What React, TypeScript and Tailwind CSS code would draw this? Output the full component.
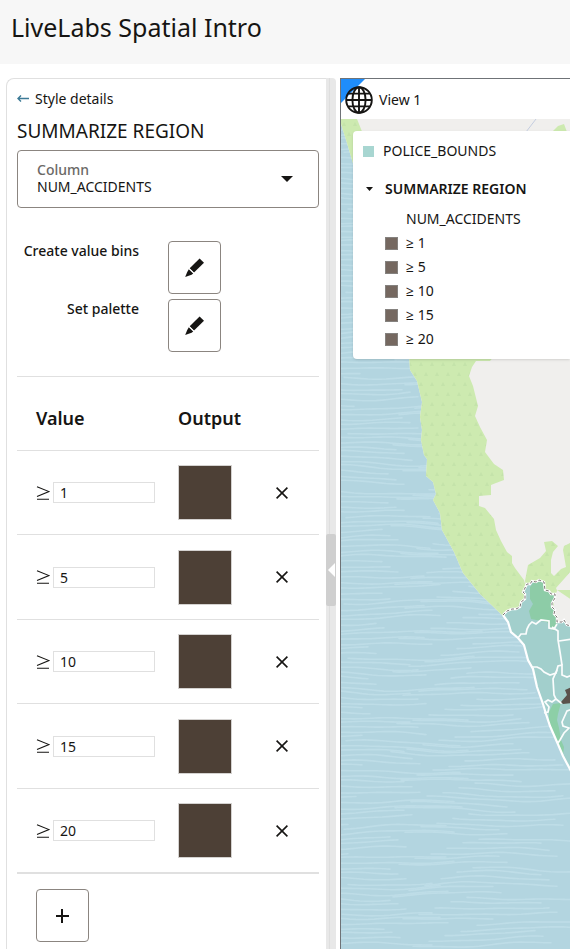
import { useState } from 'react';

const LAND_EDGE =
  '409,355 410,370 417,381 422,402 420,417 422,430 421,440 424,455 427,459 426,476 433,482 436,494 433,500 440,513 442,530 454,552 463,573 480,594 503,616';

const COAST =
  '503,615 508,622 511,632 518,638 524,645 528,660 533,669 537,687 543,704 546,714 550,726 557,742 563,756 572,773';

const DISTRICT_TOP =
  '503,615 507,611 512,609 516,609 520,607 521,602 525,599 525,594 523,592 527,584 530,584 532,581 536,582 539,580 544,582 545,590 549,591 551,594 555,594 555,598 552,603 552,607 555,610 554,614 557,617 557,622 562,622 564,620 567,625 572,626';

const DISTRICT_LINES = [
  '518,638 521,634 526,634 527,629 529,625 532,622 536,624 541,620 549,621 549,628 554,629 557,624',
  '552,627 558,631 558,640 560,652 562,665',
  '559,641 572,639',
  '532,667 537,667 541,669 544,672 550,675 556,673 558,666 562,665 562,675 567,677 572,675',
  '557,670 553,679 554,695 556,699 552,702 548,700 545,702 549,707 548,712 544,713',
  '556,699 561,703 566,700',
  '572,709 567,711 562,722 563,726 569,728 564,733 560,740 558,743'
];

const buildWaves = () => {
  const lines: string[] = [];
  for (let i = 0; i < 330; i++) {
    const row = Math.floor(i / 2);
    const y = 122 + row * 5 + (i % 2) * 1.5 + ((row * 7) % 3) * 0.6;
    const start = 300 + (i % 2) * 130 + ((i * 37) % 90) - 40;
    const length = 80 + ((i * 47) % 70);
    let d = '';
    for (let x = start; x <= start + length; x += 6) {
      const dy =
        Math.sin(x / 23 + row * 0.31) * 1.2 +
        Math.sin(x / 11 + row * 1.7) * 0.5 +
        Math.sin(x / 41 - row * 0.13) * 1.6;
      d += `${d ? 'L' : 'M'}${x} ${(y + dy).toFixed(1)}`;
    }
    lines.push(d);
  }
  return lines;
};

const WAVES = buildWaves();

const CoastMap = () => (
  <svg
    className="absolute inset-0 h-full w-full"
    viewBox="341 119 229 830"
    preserveAspectRatio="xMinYMin slice"
    aria-hidden="true"
  >
    <defs>
      <pattern id="forest" width="11" height="20" patternUnits="userSpaceOnUse">
        <rect width="11" height="20" fill="#cdeab0" />
        <path d="M1 6l2-4 2 4zM6 16l2-4 2 4z" fill="#c4e3aa" />
      </pattern>
    </defs>

    {/* Sea */}
    <rect x="341" y="119" width="900" height="830" fill="#b3d5e0" />
    {WAVES.map((d, index) => (
      <path key={index} d={d} fill="none" stroke="#c1dee8" strokeWidth="1.6" strokeLinecap="round" opacity="0.8" />
    ))}

    {/* Land */}
    <polygon points={`341,119 341,124 347,143 352,160 380,260 ${LAND_EDGE} ${COAST} 900,900 900,119`} fill="#f0efed" />
    <polygon points="341,119 357,119 363,134 400,250 400,350 409,355 380,260 352,160 347,143 341,124" fill="url(#forest)" />
    <path d="M536 119L526 132" stroke="#c4cde0" strokeWidth="1" />
    <path d="M552 132L558 126 564 124 567 132Z" fill="#cdeab0" />
    <polygon
      points={`${LAND_EDGE} 530,602 524,580 515,568 512,563 512,556 507,552 501,541 496,530 494,519 485,508 479,506 479,496 491,495 491,485 496,483 504,480 503,470 494,464 485,452 487,440 480,427 475,416 478,406 473,386 469,376 472,367 476,361 490,361 495,355`}
      fill="url(#forest)"
    />
    <path
      d="M525 581L528 565 540 558 546 551 544 542 552 541 558 546 553 552 551 560 551 573 554 576 561 569 566 567 563 550 564 546 572 542 572 570 556 588 558 593 572 599 552 606 530 600Z"
      fill="url(#forest)"
    />
    <path d="M572 570L557 591 553 600 557 622 572 626Z" fill="#f0efed" />
    <path d="M557 590L572 590V600Z" fill="#cdeab0" />

    {/* Districts */}
    <polygon points={`${DISTRICT_TOP} 900,630 900,900 ${COAST.split(' ').reverse().join(' ')}`} fill="#a2cfcc" />
    <path
      d="M534 582L539 580 544 582 545 590 555 594 552 607 557 618 557 624 553 631 547 622 531 619 529 611 533 604 530 599 530 587Z"
      fill="#8dcca7"
    />
    <path
      d="M549 712L553 704 561 703 558 714 557 720 559 728 561 740 564 747 563 755 555 738 549 722Z"
      fill="#8dcfa7"
    />
    <polyline points={COAST} fill="none" stroke="#fff" strokeWidth="2.2" />
    {DISTRICT_LINES.map((points) => (
      <polyline key={points} points={points} fill="none" stroke="#fbfdfd" strokeWidth="1.7" />
    ))}
    <polyline points={DISTRICT_TOP} fill="none" stroke="#fff" strokeWidth="2.4" />
    <polyline points={DISTRICT_TOP} fill="none" stroke="#7d7674" strokeWidth="1" strokeDasharray="3 2" />
    <path d="M561 702L567 695 565 690 572 687V703L563 704Z" fill="#5a524c" />
  </svg>
);

const PencilIcon = () => (
  <svg className="h-5 w-5" viewBox="0 0 20 20" fill="#161513" aria-hidden="true">
    <path d="M14.6 .5L19 4.7 9 14.4 4.7 10.2Z" />
    <path d="M3.8 11.2L8.2 15.4 6.6 16.7 2.3 18.2.2 18.9 2 14.5Z" />
    <path d="M4.4 10.6L8.7 14.9" stroke="#fff" strokeWidth="1" />
  </svg>
);

const GlobeIcon = () => (
  <svg className="h-7 w-7" viewBox="0 0 28 28" fill="none" stroke="#161513" strokeWidth="1.9" aria-hidden="true">
    <circle cx="14" cy="14" r="12.8" />
    <ellipse cx="14" cy="14" rx="6.6" ry="12.8" />
    <path d="M14 1v26M1 14h26M3 7.6h22M3 20.4h22" />
  </svg>
);

const tools = ['Create value bins', 'Set palette'];

export default function App() {
  const [bins, setBins] = useState(['1', '5', '10', '15', '20']);

  return (
    <div className="flex min-h-screen flex-col bg-white font-['Noto_Sans','Open_Sans',sans-serif] text-sm text-[#161513]">
      <header className="flex h-16 items-center bg-[#f7f7f7] px-[11px] pb-[10px]">
        <h1 className="text-[25px] leading-8">LiveLabs Spatial Intro</h1>
      </header>

      <main className="flex flex-1 pt-[14px] pl-[6px]">
        {/* Style panel */}
        <section className="w-80 shrink-0 rounded-tl-lg border-t border-l border-[#e0e0e0] pt-[10px] pr-[7px] pl-[10px]">
          <a href="#style" className="flex items-center gap-[6px] leading-5">
            <svg className="h-3 w-3" viewBox="0 0 12 12" fill="none" stroke="#3c7a96" strokeWidth="1.4" aria-hidden="true">
              <path d="M12 5.5H1M4 2.5l-3 3 3 3" />
            </svg>
            Style details
          </a>
          <h2 className="mt-2 text-[19px] leading-7">SUMMARIZE REGION</h2>

          <div className="relative mt-[5px] h-[58px] rounded border border-[#8b8580]">
            <label htmlFor="column" className="absolute top-[10px] left-[19px] leading-[18px] font-medium text-[#6b6966]">
              Column
            </label>
            <select
              id="column"
              defaultValue="NUM_ACCIDENTS"
              className="h-full w-full appearance-none bg-transparent px-[19px] pt-4"
            >
              <option>NUM_ACCIDENTS</option>
            </select>
            <svg className="pointer-events-none absolute top-[25px] right-[25px] h-[6px] w-3" viewBox="0 0 12 6" aria-hidden="true">
              <path d="M0 0h12L6 6z" fill="#161513" />
            </svg>
          </div>

          <div className="mt-[33px] flex flex-col gap-[5px] border-b border-[#e0e0e0] pb-6">
            {tools.map((tool) => (
              <div key={tool} className="flex">
                <span className="w-[122px] text-right leading-5 font-medium">{tool}</span>
                <button
                  type="button"
                  aria-label={tool}
                  className="ml-[29px] flex h-[53px] w-[53px] items-center justify-center rounded border border-[#8b8580]"
                >
                  <PencilIcon />
                </button>
              </div>
            ))}
          </div>

          <table className="w-full table-fixed border-collapse">
            <thead>
              <tr className="h-[73px] border-b border-[#e0e0e0] text-left text-lg">
                <th className="w-[161px] pt-[10px] pl-[19px] font-semibold">Value</th>
                <th className="w-[84px] pt-[10px] font-semibold">Output</th>
                <th></th>
              </tr>
            </thead>
            <tbody>
              {bins.map((bin, index) => (
                <tr key={bin + index} className="h-[85px] border-b border-[#e0e0e0] last:border-b-2 odd:not-last:h-[84px]">
                  <td className="pt-px pl-[19px]">
                    <label className="flex items-center gap-[3px]">
                      <svg className="h-[14px] w-[14px]" viewBox="0 0 14 14" fill="none" stroke="#161513" strokeWidth="1.1" aria-label="at least">
                        <path d="M1 .8L13 5.6 1 10.4M1 13.3h12" />
                      </svg>
                      <input defaultValue={bin} className="h-[21px] w-[102px] border border-[#e0e0e0] px-[6px]" />
                    </label>
                  </td>
                  <td className="pt-px">
                    <button
                      type="button"
                      aria-label={`Color for ${bin}`}
                      className="block h-[55px] w-[54px] border border-[#d4d2d0] bg-[#4d4036]"
                    ></button>
                  </td>
                  <td className="pt-px">
                    <button
                      type="button"
                      aria-label={`Remove ${bin}`}
                      className="ml-[14px] block"
                      onClick={() => setBins(bins.filter((_, i) => i !== index))}
                    >
                      <svg className="h-3 w-3" viewBox="0 0 12 12" fill="none" stroke="#161513" strokeWidth="1.6" aria-hidden="true">
                        <path d="M.6.6l10.8 10.8M11.4.6L.6 11.4" />
                      </svg>
                    </button>
                  </td>
                </tr>
              ))}
            </tbody>
          </table>

          <button
            type="button"
            aria-label="Add value"
            onClick={() => setBins([...bins, ''])}
            className="mt-[15px] ml-[19px] flex h-[53px] w-[53px] items-center justify-center rounded border border-[#8b8580]"
          >
            <svg className="h-[14px] w-[14px]" viewBox="0 0 14 14" stroke="#161513" strokeWidth="2" aria-hidden="true">
              <path d="M6 0v14M-1 7h14" />
            </svg>
          </button>
        </section>

        {/* Splitter */}
        <div className="relative mr-1 flex w-[10px] shrink-0 items-center rounded-tr bg-[#e8e8e8]">
          <div className="h-full w-1 border-r border-[#dedede]"></div>
          <button
            type="button"
            aria-label="Collapse panel"
            className="absolute top-[456px] left-0 flex h-[72px] w-[10px] items-center justify-end rounded-xs bg-[#cfcfcf]"
          >
            <svg className="h-[14px] w-2" viewBox="0 0 8 14" aria-hidden="true">
              <path d="M7 0v14L0 7z" fill="#fff" />
            </svg>
          </button>
        </div>

        {/* Map view */}
        <section className="flex min-w-0 flex-1 flex-col border-t border-l border-[#6f7377]">
          <div className="relative flex h-10 items-center gap-[6px] pt-[2px] pl-1">
            <svg className="absolute top-0 left-0 h-6 w-6" viewBox="0 0 24 24" aria-hidden="true">
              <path d="M0 0h24L0 24z" fill="#1f8dfb" />
            </svg>
            <div className="relative">
              <GlobeIcon />
            </div>
            <span>View 1</span>
          </div>

          <div className="relative flex-1 overflow-hidden">
            <CoastMap />
            <div className="absolute top-3 right-0 left-3 rounded-l bg-white pt-[10px] pb-2 whitespace-nowrap shadow">
              <div className="flex h-5 items-center gap-[9px] pl-[10px]">
                <span className="h-[11px] w-[11px] bg-[#a8d6d1]"></span>
                POLICE_BOUNDS
              </div>
              <button type="button" className="mt-[18px] flex h-5 items-center gap-3 pl-[13px] font-semibold">
                <svg className="h-1 w-[7px]" viewBox="0 0 7 4" aria-hidden="true">
                  <path d="M0 0h7L3.5 4z" fill="#161513" />
                </svg>
                SUMMARIZE REGION
              </button>
              <div className="mt-[10px] pl-[53px] leading-5">NUM_ACCIDENTS</div>
              <ul className="mt-[2px]">
                {bins.map((bin, index) => (
                  <li key={bin + index} className="flex h-6 items-center gap-2 pl-8">
                    <span className="h-[13px] w-[13px] border border-[#85827f] bg-[#756860]"></span>
                    ≥ {bin}
                  </li>
                ))}
              </ul>
            </div>
          </div>
        </section>
      </main>
    </div>
  );
}
